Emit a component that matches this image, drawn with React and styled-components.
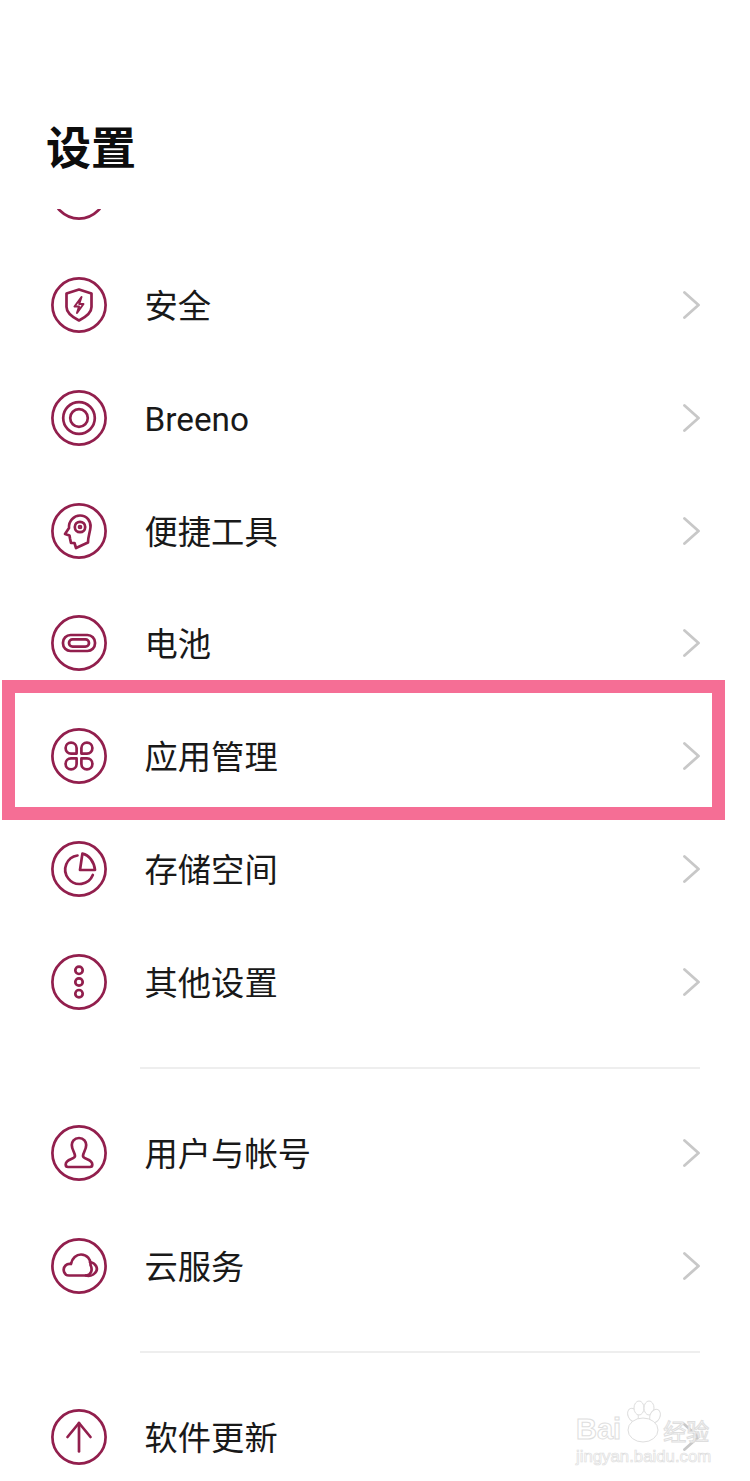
import React from "react";
import styled, { createGlobalStyle } from "styled-components";

const Global = createGlobalStyle`
  html, body { margin: 0; padding: 0; background: #fff; }
  body { font-family: Roboto, "Noto Sans CJK SC", sans-serif; }
`;

const Page = styled.div`
  position: relative;
  width: 750px;
  height: 1481px;
  overflow: hidden;
  background: #fff;
`;

const Header = styled.header`
  height: 209px;
  box-sizing: border-box;
  padding: 119px 0 0 46px;
`;

const Title = styled.h1`
  margin: 0;
  font-size: 45px;
  line-height: 62px;
  font-weight: 700;
  color: #0d0d0d;
`;

const Scroller = styled.main`
  height: 1272px;
  overflow: hidden;
`;

const List = styled.div`
  margin-top: -73.2px;
`;

const Row = styled.div`
  position: relative;
  height: 112.8px;
  display: flex;
  align-items: center;
  padding: 0 50px 0 51px;
  box-sizing: border-box;
`;

const Label = styled.span`
  flex: 1;
  margin-left: 37.5px;
  font-size: 33.3px;
  line-height: 44px;
  color: #191919;
  transform: translateY(2px);
`;

const Divider = styled.hr`
  height: 2px;
  margin: 28.6px 50px 28px 140px;
  border: 0;
  background: #eeeeee;
`;

const Highlight = styled.div`
  position: absolute;
  left: 2px;
  top: -20px;
  width: 723px;
  height: 140px;
  box-sizing: border-box;
  border: 13.5px solid #f56e95;
  pointer-events: none;
`;

const Glyph = styled.svg`
  flex: none;
  width: 56px;
  height: 56px;
  fill: none;
  stroke: #921f4d;
  stroke-width: 2.7;
  stroke-linecap: round;
  stroke-linejoin: round;
`;

const Chevron = styled.svg`
  flex: none;
  width: 17px;
  height: 28px;
  fill: none;
  stroke: #c8c8c8;
  stroke-width: 2.8;
  stroke-linecap: round;
  stroke-linejoin: round;
`;

const Watermark = styled.div`
  position: absolute;
  left: 576px;
  top: 1399px;
  width: 140px;
  height: 70px;
  pointer-events: none;
`;

const WatermarkLine = styled.div`
  display: flex;
  align-items: flex-end;
  height: 45px;
  color: #fff;
  -webkit-text-stroke: 1px #dedede;
  font-family: "Liberation Sans", sans-serif;
  font-weight: 700;
  font-size: 29px;
  line-height: 30px;
`;

const Paw = styled.svg`
  flex: none;
  width: 42px;
  height: 45px;
  fill: #fff;
  stroke: #dedede;
  stroke-width: 1;
`;

const WatermarkCn = styled.span`
  font-family: "Noto Sans CJK SC", sans-serif;
  font-size: 23px;
  line-height: 28px;
  font-weight: 400;
`;

const WatermarkUrl = styled.div`
  margin-top: 3px;
  color: #fff;
  -webkit-text-stroke: 0.7px #dedede;
  font-family: "Liberation Sans", sans-serif;
  font-size: 16.8px;
  line-height: 20px;
  white-space: nowrap;
`;

/* Every settings icon shares the ring; only the inner drawing differs. */
const Icon = ({ children }) => (
  <Glyph viewBox="-28 -28 56 56">
    <circle r="26.6" />
    {children}
  </Glyph>
);

const Petal = ({ angle }) => (
  <path
    transform={`rotate(${angle})`}
    d="M-2.4 -2.4 H-8 A5.5 5.5 0 1 1 -2.4 -8 Z"
  />
);

const icons = {
  privacy: null,
  security: (
    <>
      <path d="M0 -15.5 L12.5 -11.5 V2 C12.5 8.5 5 13 0 15.5 C-5 13 -12.5 8.5 -12.5 2 V-11.5 Z" />
      <path d="M2.5 -8 L-4.5 1.5 H0 L-2 8 L4.5 -1 H0.2 Z" strokeWidth="2" />
    </>
  ),
  breeno: (
    <>
      <circle r="15.8" />
      <circle r="8.8" />
    </>
  ),
  tools: (
    <>
      <path d="M-3 17 L-4.5 12 H-8 L-9 7.5 L-9.5 4.5 L-14 3 L-10 -3 C-10.5 -10 -5 -15.5 1 -15.5 C8 -15.5 12 -9.5 11.5 -4 C11 2 9 5 9 11.5 Z" />
      <circle cx="1" cy="-4" r="5.2" />
      <circle cx="1" cy="-4" r="1" />
    </>
  ),
  battery: (
    <>
      <rect x="-16" y="-8" width="32" height="16" rx="7.5" />
      <rect x="-10" y="-3.6" width="20" height="7.2" rx="3.6" />
    </>
  ),
  apps: (
    <>
      <Petal angle={0} />
      <Petal angle={90} />
      <Petal angle={180} />
      <Petal angle={270} />
    </>
  ),
  storage: (
    <>
      <path d="M-1.5 -13.5 A14.3 14.3 0 1 0 13.8 6" />
      <path d="M1 1 L3.4 -15.4 C10 -14 15 -7.5 16 1 Z" />
    </>
  ),
  more: (
    <>
      <circle cy="-11.7" r="3.7" />
      <circle r="3.7" />
      <circle cy="11.7" r="3.7" />
    </>
  ),
  account: (
    <path d="M0 -15 C-5 -15 -7.2 -11 -7.2 -8 C-7.2 -3 -4 -0.5 -4 3 C-4 6.5 -13.3 5.5 -13.3 11.5 C-13.3 13.3 -12.3 14 -11 14 H11 C12.3 14 13.3 13.3 13.3 11.5 C13.3 5.5 4 6.5 4 3 C4 -0.5 7.2 -3 7.2 -8 C7.2 -11 5 -15 0 -15 Z" />
  ),
  cloud: (
    <>
      <path d="M-10 9.5 C-15 9.5 -17 3 -13.5 -0.5 C-12 -2 -10 -2.5 -8 -2 C-7 -8 -2.5 -11.5 2 -11.5 C8 -11.5 12 -6.5 11.5 -1 C14 4 12 9 7 9.5 Z" />
      <path d="M11 -4 C17 -3 20 3 16 7 C14 9.5 10 10.5 7 9.5" />
    </>
  ),
  update: (
    <>
      <path d="M0 14.5 V-14" />
      <path d="M-11.5 0 L0 -14 L11.5 0" />
    </>
  ),
};

const SettingRow = ({ icon, label, chevron = true, highlighted }) => (
  <Row>
    <Icon>{icons[icon]}</Icon>
    <Label>{label}</Label>
    {chevron && (
      <Chevron viewBox="0 0 17 28">
        <path d="M1.5 1.5 L15.5 14 L1.5 26.5" />
      </Chevron>
    )}
    {highlighted && <Highlight />}
  </Row>
);

export default function App() {
  return (
    <Page>
      <Global />
      <Header>
        <Title>设置</Title>
      </Header>
      <Scroller>
        <List>
          <SettingRow icon="privacy" chevron={false} />
          <SettingRow icon="security" label="安全" />
          <SettingRow icon="breeno" label="Breeno" />
          <SettingRow icon="tools" label="便捷工具" />
          <SettingRow icon="battery" label="电池" />
          <SettingRow icon="apps" label="应用管理" highlighted />
          <SettingRow icon="storage" label="存储空间" />
          <SettingRow icon="more" label="其他设置" />
          <Divider />
          <SettingRow icon="account" label="用户与帐号" />
          <SettingRow icon="cloud" label="云服务" />
          <Divider />
          <SettingRow icon="update" label="软件更新" />
        </List>
      </Scroller>
      <Watermark>
        <WatermarkLine>
          Bai
          <Paw viewBox="0 0 42 45">
            <ellipse cx="12" cy="16" rx="5" ry="7" transform="rotate(-25 12 16)" />
            <ellipse cx="18" cy="9" rx="5" ry="7" />
            <ellipse cx="28" cy="9" rx="5" ry="7" />
            <ellipse cx="34" cy="17" rx="5" ry="7" transform="rotate(25 34 17)" />
            <ellipse cx="22" cy="31" rx="15" ry="12" />
          </Paw>
          <WatermarkCn>经验</WatermarkCn>
        </WatermarkLine>
        <WatermarkUrl>jingyan.baidu.com</WatermarkUrl>
      </Watermark>
    </Page>
  );
}
